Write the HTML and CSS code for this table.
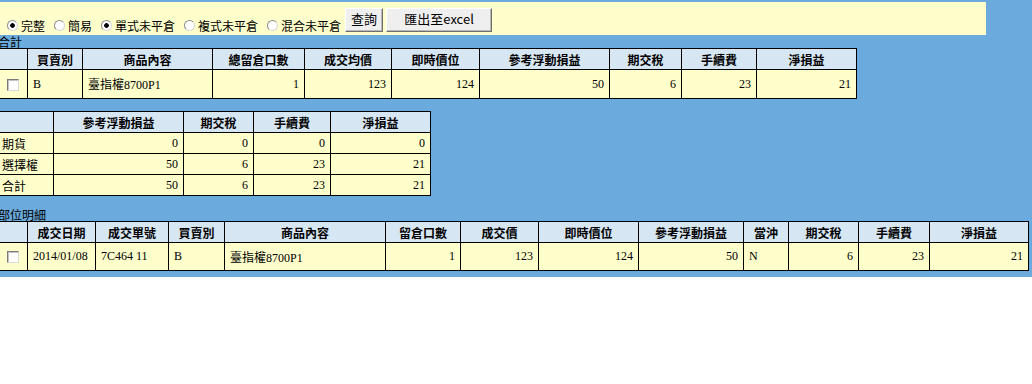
FILE: index.html
```html
<!DOCTYPE html>
<html lang="zh-Hant">
<head>
    <meta charset="UTF-8">
    <title>未平倉查詢</title>
    <link rel="stylesheet" href="styles.css">
</head>
<body>
    <div class="page">
        <form class="toolbar">
            <label class="opt"><input type="radio" name="view" checked>完整</label>
            <label class="opt"><input type="radio" name="view">簡易</label>
            <label class="opt"><input type="radio" name="kind" checked>單式未平倉</label>
            <label class="opt"><input type="radio" name="kind">複式未平倉</label>
            <label class="opt"><input type="radio" name="kind">混合未平倉</label>
            <button type="button" class="btn btn-query">查詢</button>
            <button type="button" class="btn btn-export">匯出至excel</button>
        </form>

        <div class="caption">合計</div>
        <table class="grid grid-sum" width="857">
            <colgroup>
                <col width="28"><col width="55"><col width="130"><col width="92"><col width="87">
                <col width="88"><col width="130"><col width="72"><col width="75"><col width="100">
            </colgroup>
            <tr class="head">
                <th></th>
                <th>買賣別</th>
                <th>商品內容</th>
                <th>總留倉口數</th>
                <th>成交均價</th>
                <th>即時價位</th>
                <th>參考浮動損益</th>
                <th>期交稅</th>
                <th>手續費</th>
                <th>淨損益</th>
            </tr>
            <tr class="row">
                <td class="chk"><input type="checkbox"></td>
                <td>B</td>
                <td>臺指權8700P1</td>
                <td class="num">1</td>
                <td class="num">123</td>
                <td class="num">124</td>
                <td class="num">50</td>
                <td class="num">6</td>
                <td class="num">23</td>
                <td class="num">21</td>
            </tr>
        </table>

        <table class="grid grid-type" width="431">
            <colgroup>
                <col width="54"><col width="130"><col width="70"><col width="77"><col width="100">
            </colgroup>
            <tr class="head">
                <th></th>
                <th>參考浮動損益</th>
                <th>期交稅</th>
                <th>手續費</th>
                <th>淨損益</th>
            </tr>
            <tr class="line">
                <td class="name">期貨</td>
                <td class="num">0</td>
                <td class="num">0</td>
                <td class="num">0</td>
                <td class="num">0</td>
            </tr>
            <tr class="line">
                <td class="name">選擇權</td>
                <td class="num">50</td>
                <td class="num">6</td>
                <td class="num">23</td>
                <td class="num">21</td>
            </tr>
            <tr class="line">
                <td class="name">合計</td>
                <td class="num">50</td>
                <td class="num">6</td>
                <td class="num">23</td>
                <td class="num">21</td>
            </tr>
        </table>

        <div class="caption caption-detail">部位明細</div>
        <table class="grid grid-detail" width="1029">
            <colgroup>
                <col width="28"><col width="68"><col width="73"><col width="56"><col width="161">
                <col width="75"><col width="78"><col width="100"><col width="105"><col width="45">
                <col width="70"><col width="71"><col width="99">
            </colgroup>
            <tr class="head">
                <th></th>
                <th>成交日期</th>
                <th>成交單號</th>
                <th>買賣別</th>
                <th>商品內容</th>
                <th>留倉口數</th>
                <th>成交價</th>
                <th>即時價位</th>
                <th>參考浮動損益</th>
                <th>當沖</th>
                <th>期交稅</th>
                <th>手續費</th>
                <th>淨損益</th>
            </tr>
            <tr class="row">
                <td class="chk"><input type="checkbox"></td>
                <td>2014/01/08</td>
                <td>7C464 11</td>
                <td>B</td>
                <td>臺指權8700P1</td>
                <td class="num">1</td>
                <td class="num">123</td>
                <td class="num">124</td>
                <td class="num">50</td>
                <td>N</td>
                <td class="num">6</td>
                <td class="num">23</td>
                <td class="num">21</td>
            </tr>
        </table>
    </div>
</body>
</html>
```

FILE: styles.css
```css
body {
    margin: 0;
    background-color: #fff;
    font-family: "Noto Sans CJK TC", sans-serif;
    font-size: 12px;
    color: #000;
}

.page {
    background-color: #6aaadc;
    padding: 2px 0 6px;
}

/* query options bar */
.toolbar {
    box-sizing: border-box;
    width: 986px;
    height: 33px;
    margin: 0;
    padding: 6px 0 0 7px;
    display: flex;
    align-items: flex-start;
    background-color: #ffffcc;
}

.opt {
    display: flex;
    align-items: center;
    margin: 11px 9px 0 0;
    line-height: 13px;
    white-space: nowrap;
}

.opt input {
    appearance: none;
    box-sizing: border-box;
    width: 11px;
    height: 11px;
    margin: 0 3px 0 0;
    border: 1px solid #8c8c8c;
    border-right-color: #d8d8d8;
    border-bottom-color: #d8d8d8;
    border-radius: 50%;
    background-color: #fff;
}

.opt input:checked {
    background: radial-gradient(circle, #000 0 2px, #fff 2.6px);
}

.btn {
    box-sizing: border-box;
    height: 24px;
    padding: 0 0 4px;
    border: 1px solid;
    border-color: #fff #6f6f6f #6f6f6f #fff;
    box-shadow: inset -1px -1px 0 #b8b8b8;
    background-color: #efefef;
    font-family: "Noto Sans CJK TC", sans-serif;
    font-size: 13px;
    color: #000;
}

.btn-query {
    width: 38px;
    margin: 0 3px 0 -5px;
}

.btn-export {
    width: 106px;
}

.caption {
    height: 13px;
    margin-left: -2px;
    line-height: 13px;
    font-size: 12px;
}

.caption-detail {
    margin-top: 12px;
}

/* data grids */
.grid {
    border-collapse: collapse;
    table-layout: fixed;
    margin-left: -1px;
}

.grid th,
.grid td {
    border: 1px solid #000;
    padding: 0 5px;
    overflow: hidden;
    white-space: nowrap;
}

.grid th {
    background-color: #d6e6f3;
    font-weight: bold;
    text-align: center;
}

.grid td {
    background-color: #ffffcc;
    font-family: "Liberation Serif", "Noto Sans CJK TC", serif;
    text-align: left;
}

.grid .num {
    text-align: right;
}

.grid .name {
    padding-left: 2px;
    font-family: "Noto Sans CJK TC", sans-serif;
}

.grid .chk {
    padding: 0 0 0 7px;
}

.chk input {
    appearance: none;
    display: block;
    box-sizing: border-box;
    width: 12px;
    height: 12px;
    margin: 1px 0 0;
    border: 1px solid;
    border-color: #7a7a7a #dadada #dadada #7a7a7a;
    box-shadow: inset 1px 1px 0 #c4c4c4;
    background-color: #fff;
}

.grid .head {
    height: 21px;
}

.grid-sum .row {
    height: 29px;
}

.grid-type {
    margin-top: 12px;
}

.grid-type .line {
    height: 21px;
}

.grid-detail .row {
    height: 28px;
}
```
